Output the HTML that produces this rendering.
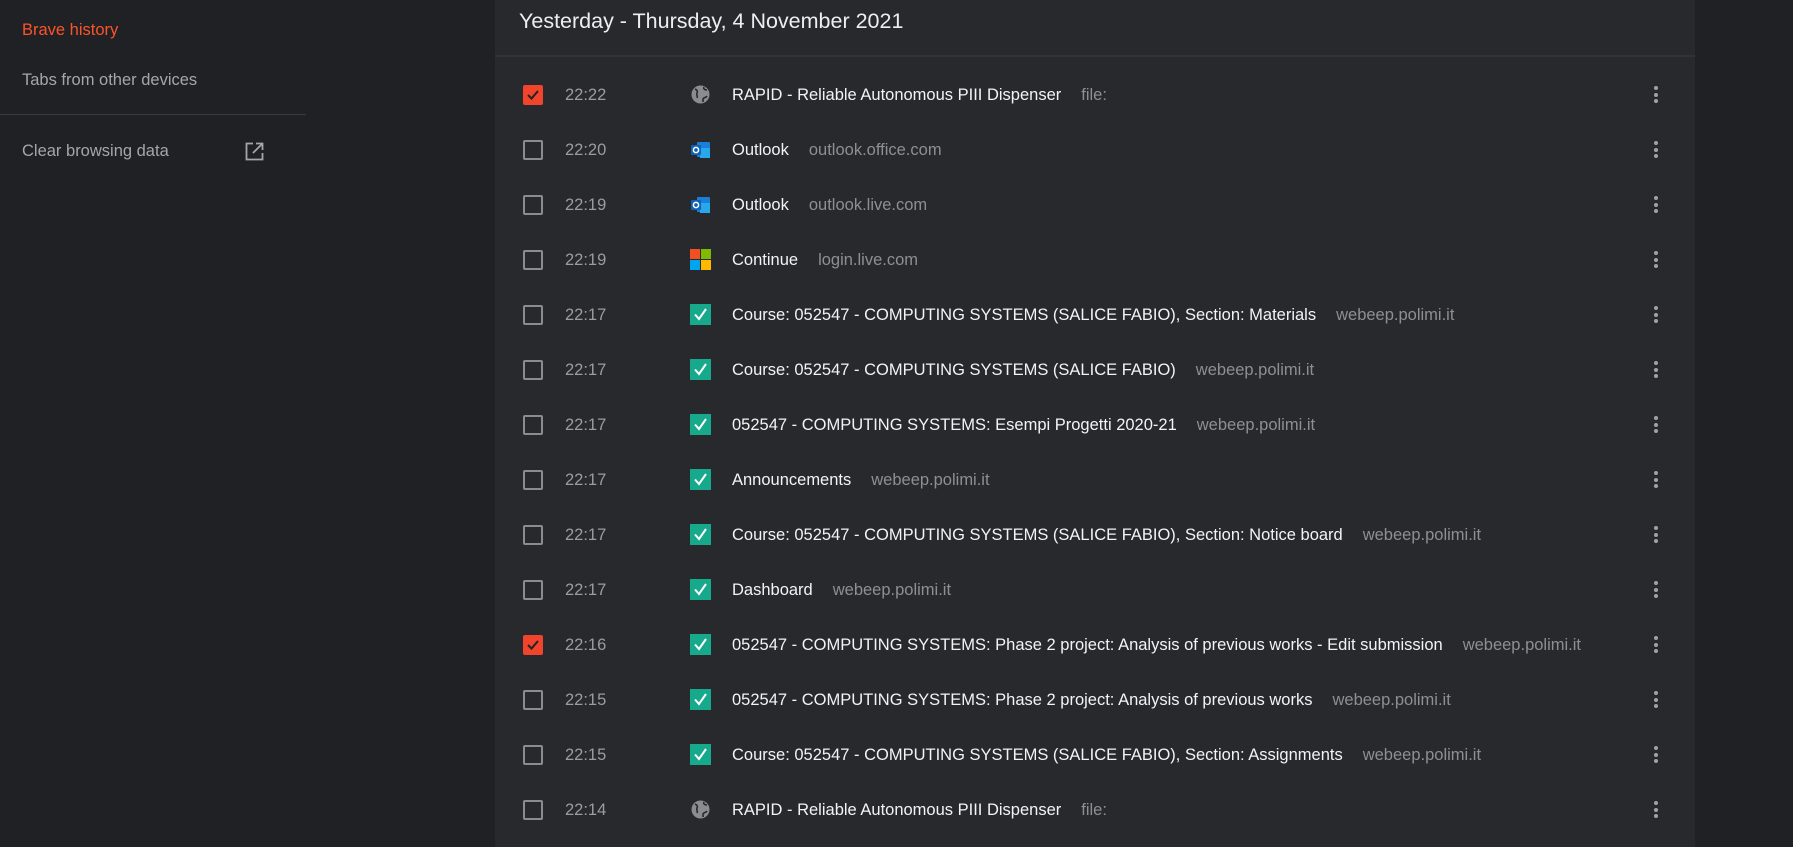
<!DOCTYPE html>
<html><head><meta charset="utf-8"><style>
*{margin:0;padding:0;box-sizing:border-box}
body{width:1793px;height:847px;background:#202124;font-family:"Liberation Sans",sans-serif;position:relative;overflow:hidden}
.side{position:absolute;left:22px;font-size:16.5px;color:#a3a6ab;line-height:20px}
.panel{position:absolute;left:495px;top:0;width:1200px;height:847px;background:#28292d}
.hdr{position:absolute;left:24px;top:8px;font-size:21.5px;color:#eceef0;line-height:26px}
.hline{position:absolute;left:0;top:55px;width:1200px;height:2px;background:#323337}
.row{position:absolute;left:0;width:1200px;height:55px}
.cb{position:absolute;left:28px;top:19px;width:20px;height:20px;border:2px solid #8a8c90;border-radius:2px}
.cb.on{background:#f0442c;border-color:#f0442c}
.cb.on svg{position:absolute;left:1px;top:1px}
.time{position:absolute;left:70px;top:19px;font-size:16.5px;color:#9a9ca0;line-height:20px}
.fav{position:absolute;left:195px;top:18px;width:21px;height:21px}
.t{position:absolute;left:237px;top:19px;font-size:16.5px;color:#f2f3f5;line-height:20px;white-space:nowrap}
.t span{color:#8d8f93;margin-left:20px}
.k{position:absolute;left:1159px;top:20px;width:4px}
.k i{display:block;width:4px;height:4px;border-radius:2px;background:#a0a2a6;margin-bottom:2.5px}
</style></head><body>
<div class="side" style="top:20px;color:#fb542b">Brave history</div>
<div class="side" style="top:70px">Tabs from other devices</div>
<div style="position:absolute;left:0;top:114px;width:306px;height:1px;background:#3a3b3f"></div>
<div class="side" style="top:141px">Clear browsing data</div>
<svg style="position:absolute;left:245px;top:142px" width="19" height="19" viewBox="0 0 19 19" fill="none" stroke="#a3a6ab" stroke-width="1.8"><path d="M8 1.5H1.5v16h16V11"/><path d="M11 1.5h6.5V8M17.5 1.5L8 11"/></svg>
<div class="panel">
<div class="hdr">Yesterday - Thursday, 4 November 2021</div>
<div class="hline"></div>
</div>
<div style="position:absolute;left:495px;top:66px;width:1200px">
<div class="row" style="top:0"><div class="cb on"><svg width="14" height="14" viewBox="0 0 14 14"><path d="M2 7l3.5 3.5L12 3" stroke="#222" stroke-width="2" fill="none"/></svg></div><div class="time">22:22</div><svg class="fav" viewBox="0 0 21 21"><circle cx="10.5" cy="10.5" r="9" fill="#8a8c90"/><path d="M5 5c2 1 3 2 2 4s1 3 0 5M14 3c-1 2 1 3 3 3M13 18v-3c1-2 3-1 4-3" stroke="#28292d" stroke-width="1.6" fill="none"/></svg><div class="t">RAPID - Reliable Autonomous PIII Dispenser<span>file:</span></div><div class="k"><i></i><i></i><i></i></div></div>
<div class="row" style="top:55px"><div class="cb"></div><div class="time">22:20</div><svg class="fav" viewBox="0 0 21 21"><rect x="7" y="3" width="13" height="15" rx="1" fill="#1a7fd9"/><rect x="10" y="9" width="10" height="10" fill="#28a8ea"/><rect x="1" y="6" width="10" height="10" rx="1" fill="#0f62b5"/><circle cx="6" cy="11" r="2.6" fill="none" stroke="#fff" stroke-width="1.5"/></svg><div class="t">Outlook<span>outlook.office.com</span></div><div class="k"><i></i><i></i><i></i></div></div>
<div class="row" style="top:110px"><div class="cb"></div><div class="time">22:19</div><svg class="fav" viewBox="0 0 21 21"><rect x="7" y="3" width="13" height="15" rx="1" fill="#1a7fd9"/><rect x="10" y="9" width="10" height="10" fill="#28a8ea"/><rect x="1" y="6" width="10" height="10" rx="1" fill="#0f62b5"/><circle cx="6" cy="11" r="2.6" fill="none" stroke="#fff" stroke-width="1.5"/></svg><div class="t">Outlook<span>outlook.live.com</span></div><div class="k"><i></i><i></i><i></i></div></div>
<div class="row" style="top:165px"><div class="cb"></div><div class="time">22:19</div><svg class="fav" viewBox="0 0 21 21"><rect x="0" y="0" width="10" height="10" fill="#f25022"/><rect x="11" y="0" width="10" height="10" fill="#7fba00"/><rect x="0" y="11" width="10" height="10" fill="#00a4ef"/><rect x="11" y="11" width="10" height="10" fill="#ffb900"/></svg><div class="t">Continue<span>login.live.com</span></div><div class="k"><i></i><i></i><i></i></div></div>
<div class="row" style="top:220px"><div class="cb"></div><div class="time">22:17</div><svg class="fav" viewBox="0 0 21 21"><rect width="21" height="21" fill="#16a98b"/><path d="M5 10.5l4 4.5 7-10" stroke="#fff" stroke-width="2" fill="none"/></svg><div class="t">Course: 052547 - COMPUTING SYSTEMS (SALICE FABIO), Section: Materials<span>webeep.polimi.it</span></div><div class="k"><i></i><i></i><i></i></div></div>
<div class="row" style="top:275px"><div class="cb"></div><div class="time">22:17</div><svg class="fav" viewBox="0 0 21 21"><rect width="21" height="21" fill="#16a98b"/><path d="M5 10.5l4 4.5 7-10" stroke="#fff" stroke-width="2" fill="none"/></svg><div class="t">Course: 052547 - COMPUTING SYSTEMS (SALICE FABIO)<span>webeep.polimi.it</span></div><div class="k"><i></i><i></i><i></i></div></div>
<div class="row" style="top:330px"><div class="cb"></div><div class="time">22:17</div><svg class="fav" viewBox="0 0 21 21"><rect width="21" height="21" fill="#16a98b"/><path d="M5 10.5l4 4.5 7-10" stroke="#fff" stroke-width="2" fill="none"/></svg><div class="t">052547 - COMPUTING SYSTEMS: Esempi Progetti 2020-21<span>webeep.polimi.it</span></div><div class="k"><i></i><i></i><i></i></div></div>
<div class="row" style="top:385px"><div class="cb"></div><div class="time">22:17</div><svg class="fav" viewBox="0 0 21 21"><rect width="21" height="21" fill="#16a98b"/><path d="M5 10.5l4 4.5 7-10" stroke="#fff" stroke-width="2" fill="none"/></svg><div class="t">Announcements<span>webeep.polimi.it</span></div><div class="k"><i></i><i></i><i></i></div></div>
<div class="row" style="top:440px"><div class="cb"></div><div class="time">22:17</div><svg class="fav" viewBox="0 0 21 21"><rect width="21" height="21" fill="#16a98b"/><path d="M5 10.5l4 4.5 7-10" stroke="#fff" stroke-width="2" fill="none"/></svg><div class="t">Course: 052547 - COMPUTING SYSTEMS (SALICE FABIO), Section: Notice board<span>webeep.polimi.it</span></div><div class="k"><i></i><i></i><i></i></div></div>
<div class="row" style="top:495px"><div class="cb"></div><div class="time">22:17</div><svg class="fav" viewBox="0 0 21 21"><rect width="21" height="21" fill="#16a98b"/><path d="M5 10.5l4 4.5 7-10" stroke="#fff" stroke-width="2" fill="none"/></svg><div class="t">Dashboard<span>webeep.polimi.it</span></div><div class="k"><i></i><i></i><i></i></div></div>
<div class="row" style="top:550px"><div class="cb on"><svg width="14" height="14" viewBox="0 0 14 14"><path d="M2 7l3.5 3.5L12 3" stroke="#222" stroke-width="2" fill="none"/></svg></div><div class="time">22:16</div><svg class="fav" viewBox="0 0 21 21"><rect width="21" height="21" fill="#16a98b"/><path d="M5 10.5l4 4.5 7-10" stroke="#fff" stroke-width="2" fill="none"/></svg><div class="t">052547 - COMPUTING SYSTEMS: Phase 2 project: Analysis of previous works - Edit submission<span>webeep.polimi.it</span></div><div class="k"><i></i><i></i><i></i></div></div>
<div class="row" style="top:605px"><div class="cb"></div><div class="time">22:15</div><svg class="fav" viewBox="0 0 21 21"><rect width="21" height="21" fill="#16a98b"/><path d="M5 10.5l4 4.5 7-10" stroke="#fff" stroke-width="2" fill="none"/></svg><div class="t">052547 - COMPUTING SYSTEMS: Phase 2 project: Analysis of previous works<span>webeep.polimi.it</span></div><div class="k"><i></i><i></i><i></i></div></div>
<div class="row" style="top:660px"><div class="cb"></div><div class="time">22:15</div><svg class="fav" viewBox="0 0 21 21"><rect width="21" height="21" fill="#16a98b"/><path d="M5 10.5l4 4.5 7-10" stroke="#fff" stroke-width="2" fill="none"/></svg><div class="t">Course: 052547 - COMPUTING SYSTEMS (SALICE FABIO), Section: Assignments<span>webeep.polimi.it</span></div><div class="k"><i></i><i></i><i></i></div></div>
<div class="row" style="top:715px"><div class="cb"></div><div class="time">22:14</div><svg class="fav" viewBox="0 0 21 21"><circle cx="10.5" cy="10.5" r="9" fill="#8a8c90"/><path d="M5 5c2 1 3 2 2 4s1 3 0 5M14 3c-1 2 1 3 3 3M13 18v-3c1-2 3-1 4-3" stroke="#28292d" stroke-width="1.6" fill="none"/></svg><div class="t">RAPID - Reliable Autonomous PIII Dispenser<span>file:</span></div><div class="k"><i></i><i></i><i></i></div></div>
</div>
</body></html>
